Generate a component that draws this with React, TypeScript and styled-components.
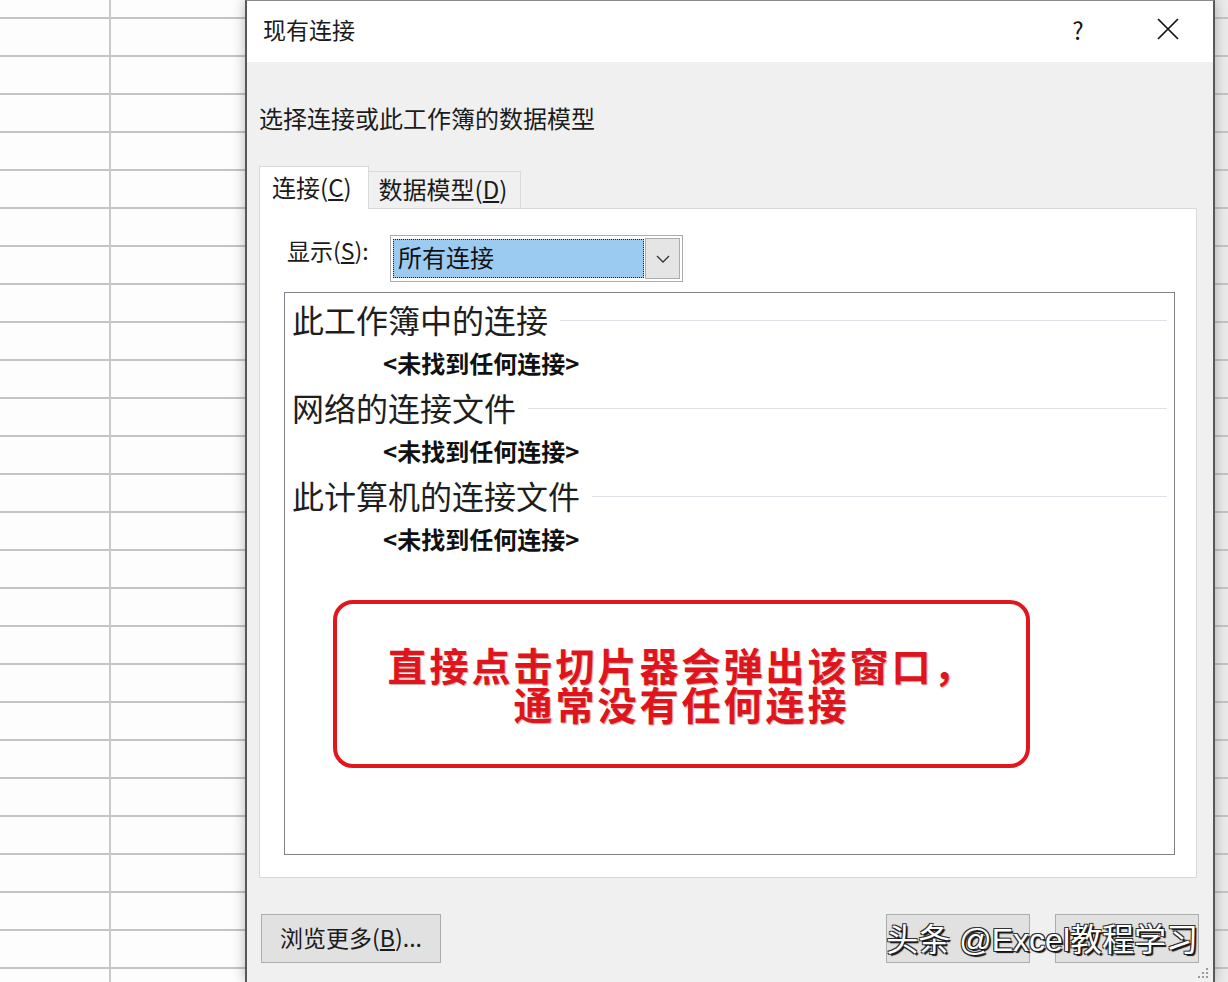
import React from "react";
import styled, { createGlobalStyle } from "styled-components";

const GlobalStyle = createGlobalStyle`
  html, body { margin: 0; padding: 0; background: #fdfdfd; }
  body { font-family: "Noto Sans CJK SC", "Noto Sans", sans-serif; }
  * { box-sizing: border-box; }
`;

const Page = styled.div`
  width: 1228px;
  height: 982px;
  overflow: hidden;
  display: grid;
  grid-template-columns: 245px 970px 13px;
`;

const Sheet = styled.div<{ $divider?: boolean; $shade?: boolean }>`
  background-color: ${(p) => (p.$shade ? "#ebebeb" : "#fdfdfd")};
  background-image: ${(p) =>
      p.$divider
        ? "linear-gradient(to right, transparent 109px, #c9c9c9 109px, #c9c9c9 111px, transparent 111px), "
        : ""}
    repeating-linear-gradient(
      to bottom,
      transparent 0px,
      transparent 17px,
      #c4c4c4 17px,
      #c4c4c4 19px,
      transparent 19px,
      transparent 38px
    );
`;

const Dialog = styled.div`
  position: relative;
  z-index: 1;
  display: flex;
  flex-direction: column;
  background: #f0f0f0;
  border-left: 2px solid #585858;
  border-right: 2px solid #585858;
  border-top: 1px solid #8a8a8a;
  box-shadow: 0 0 12px rgba(0, 0, 0, 0.28);
  color: #1b1b1b;
`;

const TitleBar = styled.div`
  height: 61px;
  background: #fff;
  display: flex;
  align-items: center;
  padding: 0 0 5px 16px;
`;

const Title = styled.div`
  flex: 1;
  font-size: 23px;
  color: #1b1b1b;
`;

const CaptionButton = styled.div`
  width: 90px;
  height: 56px;
  display: flex;
  align-items: center;
  justify-content: center;
  font-size: 24px;
  color: #111;
`;

const Body = styled.div`
  flex: 1;
  display: flex;
  flex-direction: column;
  padding: 40px 16px 0 12px;
`;

const Prompt = styled.div`
  font-size: 24px;
  line-height: 32px;
  margin-left: 0;
`;

const TabStrip = styled.div`
  display: flex;
  align-items: flex-end;
  height: 42px;
  margin-top: 32px;
`;

const Tab = styled.div<{ $active?: boolean }>`
  height: ${(p) => (p.$active ? "43px" : "37px")};
  margin-bottom: ${(p) => (p.$active ? "-1px" : "0")};
  position: relative;
  z-index: ${(p) => (p.$active ? 2 : 1)};
  display: flex;
  align-items: center;
  padding: ${(p) => (p.$active ? "0 16px 4px 12px" : "0 13px 3px 10px")};
  background: ${(p) => (p.$active ? "#ffffff" : "#f0f0f0")};
  border: 1px solid #d9d9d9;
  border-bottom: none;
  border-left: ${(p) => (p.$active ? "1px solid #d9d9d9" : "none")};
  font-size: 24px;
`;

const Panel = styled.div`
  height: 670px;
  display: flex;
  flex-direction: column;
  background: #fff;
  border: 1px solid #d9d9d9;
  padding: 26px 21px 22px 24px;
`;

const ShowRow = styled.div`
  display: flex;
  align-items: center;
  height: 47px;
`;

const ShowLabel = styled.div`
  width: 103px;
  margin-left: 3px;
  padding-bottom: 17px;
  height: 47px;
  display: flex;
  align-items: center;
  font-size: 23px;
`;

const Combo = styled.div`
  width: 293px;
  height: 47px;
  display: flex;
  gap: 1px;
  padding: 2px;
  border: 1px solid #acacac;
  background: #fff;
`;

const ComboValue = styled.div`
  flex: 1;
  display: flex;
  align-items: center;
  padding: 0 0 5px 5px;
  margin: 1px 0;
  background: #9ccbf2;
  outline: 1px dotted #1d1d1d;
  outline-offset: -1px;
  font-size: 24px;
  color: #111;
`;

const ComboButton = styled.div`
  width: 35px;
  display: flex;
  align-items: center;
  justify-content: center;
  background: #e5e5e5;
  border: 1px solid #adadad;
`;

const ListBox = styled.div`
  flex: 1;
  margin-top: 10px;
  border: 1px solid #7f8389;
  background: #fff;
  padding: 6px 7px;
  display: flex;
  flex-direction: column;
`;

const GroupRow = styled.div`
  height: 44px;
  display: flex;
  align-items: center;
  padding-bottom: 5px;
  font-size: 32px;
  color: #1e1e1e;
  white-space: nowrap;
`;

const Rule = styled.div`
  flex: 1;
  height: 1px;
  margin: 4px 0 0 12px;
  background: #dde1e6;
`;

const ItemRow = styled.div`
  height: 44px;
  display: flex;
  align-items: center;
  padding: 0 0 6px 91px;
  font-size: 24px;
  font-weight: 700;
  color: #111;
`;

const Callout = styled.div`
  margin: 37px 0 0 41px;
  width: 697px;
  height: 168px;
  border: 4px solid #e2161d;
  border-radius: 20px;
  display: flex;
  align-items: center;
  justify-content: center;
  text-align: center;
  color: #e0141c;
  font-size: 39px;
  font-weight: 700;
  line-height: 39px;
  letter-spacing: 3px;
  text-shadow: 1px 1px 1px rgba(90, 0, 0, 0.35);
`;

const ButtonRow = styled.div`
  position: relative;
  display: flex;
  gap: 25px;
  height: 49px;
  margin: 36px -2px 0 2px;
`;

const Button = styled.div<{ $w: number }>`
  width: ${(p) => p.$w}px;
  height: 49px;
  display: flex;
  align-items: center;
  justify-content: center;
  padding-bottom: 3px;
  background: #e1e1e1;
  border: 1px solid #adadad;
  font-size: 23px;
  color: #1b1b1b;
`;

const Spacer = styled.div`
  flex: 1;
`;

const Watermark = styled.div`
  position: absolute;
  right: 1px;
  top: 0;
  bottom: 0;
  display: flex;
  align-items: center;
  padding-bottom: 4px;
  font-family: "Liberation Sans", "Noto Sans CJK SC", sans-serif;
  font-size: 32px;
  color: #ffffff;
  text-shadow: 2px 2px 1px #111, -1px -1px 0 #333, 1px -1px 0 #333, -1px 1px 0 #333;
  white-space: pre;
`;

const Grip = styled.svg`
  position: absolute;
  right: 3px;
  bottom: 2px;
`;

const Close = () => (
  <svg width="22" height="22" viewBox="0 0 22 22">
    <path d="M1 1 L21 21 M21 1 L1 21" stroke="#111" strokeWidth="1.7" fill="none" />
  </svg>
);

const Chevron = () => (
  <svg width="14" height="8" viewBox="0 0 14 8">
    <polyline points="1,1 7,7 13,1" stroke="#333" strokeWidth="1.3" fill="none" />
  </svg>
);

const groups = ["此工作簿中的连接", "网络的连接文件", "此计算机的连接文件"];

export default function App() {
  return (
    <>
      <GlobalStyle />
      <Page>
        <Sheet $divider />
        <Dialog>
          <TitleBar>
            <Title>现有连接</Title>
            <CaptionButton>?</CaptionButton>
            <CaptionButton>
              <Close />
            </CaptionButton>
          </TitleBar>
          <Body>
            <Prompt>选择连接或此工作簿的数据模型</Prompt>
            <TabStrip>
              <Tab $active>
                连接(<u>C</u>)
              </Tab>
              <Tab>
                数据模型(<u>D</u>)
              </Tab>
            </TabStrip>
            <Panel>
              <ShowRow>
                <ShowLabel>
                  显示(<u>S</u>):
                </ShowLabel>
                <Combo>
                  <ComboValue>所有连接</ComboValue>
                  <ComboButton>
                    <Chevron />
                  </ComboButton>
                </Combo>
              </ShowRow>
              <ListBox>
                {groups.map((g) => (
                  <React.Fragment key={g}>
                    <GroupRow>
                      {g}
                      <Rule />
                    </GroupRow>
                    <ItemRow>&lt;未找到任何连接&gt;</ItemRow>
                  </React.Fragment>
                ))}
                <Callout>
                  直接点击切片器会弹出该窗口，
                  <br />
                  通常没有任何连接
                </Callout>
              </ListBox>
            </Panel>
            <ButtonRow>
              <Button $w={180}>
                浏览更多(<u>B</u>)...
              </Button>
              <Spacer />
              <Button $w={144} aria-label="确定" />
              <Button $w={144} aria-label="取消" />
              <Watermark>头条 @Excel教程学习</Watermark>
            </ButtonRow>
          </Body>
          <Grip width="14" height="14" viewBox="0 0 14 14">
            {[
              [10, 2],
              [6, 6],
              [10, 6],
              [2, 10],
              [6, 10],
              [10, 10],
            ].map(([x, y]) => (
              <rect key={`${x}-${y}`} x={x} y={y} width="2" height="2" fill="#9a9a9a" />
            ))}
          </Grip>
        </Dialog>
        <Sheet $shade />
      </Page>
    </>
  );
}
